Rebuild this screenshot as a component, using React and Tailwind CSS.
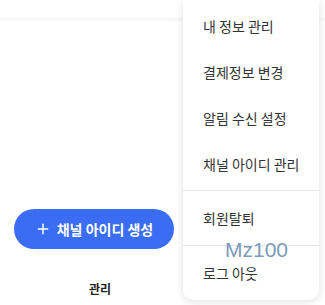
import { Plus } from "lucide-react";

const menuGroups = [
  ["내 정보 관리", "결제정보 변경", "알림 수신 설정", "채널 아이디 관리"],
  ["회원탈퇴"],
  ["로그 아웃"],
];

export default function App() {
  return (
    <div
      className="relative w-[325px] h-[305px] overflow-hidden bg-white"
      style={{ fontFamily: '"Noto Sans CJK KR", "Noto Sans", sans-serif' }}
    >
      {/* header */}
      <div className="h-[18px] bg-white shadow-[0_2px_4px_rgba(0,0,0,0.05)]"></div>

      {/* create button */}
      <div className="pl-[14px] pt-[191px]">
        <button className="flex items-center justify-center gap-[6px] w-[160px] h-[40px] rounded-full bg-[#3a6cf4] text-white text-[14px] font-bold">
          <Plus size={16} strokeWidth={2.2} />
          <span>채널 아이디 생성</span>
        </button>
      </div>
      <div className="mt-[31px] w-[200px] text-center text-[12px] font-bold text-[#222]">
        관리
      </div>

      {/* dropdown menu */}
      <div className="absolute left-[183px] top-0 w-[136px] h-[300px] bg-white rounded-b-[10px] shadow-[0_2px_8px_rgba(0,0,0,0.12)]">
        {menuGroups.map((group, i) => (
          <div
            key={i}
            className={
              i === 0
                ? "pt-[3px] pb-[3px] border-b border-[#e5e7eb]"
                : i === 1
                ? "py-[4px] border-b border-[#e5e7eb]"
                : "py-[4px]"
            }
          >
            {group.map((label) => (
              <div
                key={label}
                className="h-[46px] flex items-center pl-[20px] text-[14px] text-[#333]"
              >
                {label}
              </div>
            ))}
          </div>
        ))}
      </div>

      {/* watermark */}
      <div
        className="absolute left-[225px] top-[239px] text-[21px] leading-none text-[#7b9cb9]"
        style={{ fontFamily: '"Liberation Sans", Arial, sans-serif' }}
      >
        Mz100
      </div>
    </div>
  );
}
